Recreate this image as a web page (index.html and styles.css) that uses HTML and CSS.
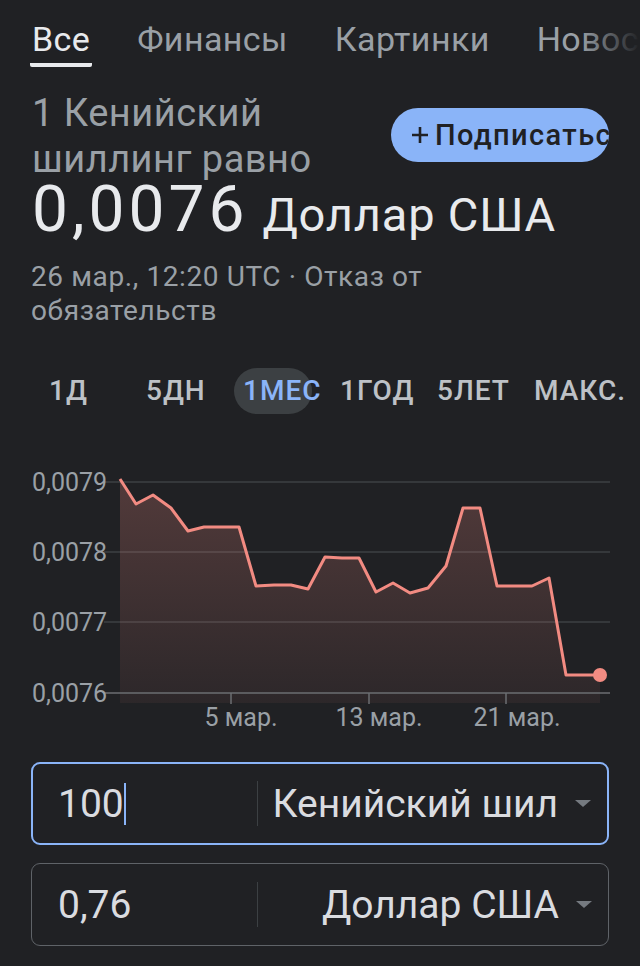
FILE: index.html
```html
<!DOCTYPE html>
<html>

<head>
  <title>1 Кенийский шиллинг равно</title>
  <meta charset="utf-8">
  <link rel="stylesheet" href="styles.css">
</head>

<body>
  <nav class="tabs">
    <span class="tab active">Все</span>
    <span class="tab">Финансы</span>
    <span class="tab">Картинки</span>
    <span class="tab">Новости</span>
    <span class="tab">Видео</span>
  </nav>

  <div class="header">
    <div class="title">1 Кенийский<br>шиллинг равно</div>
    <div class="follow">
      <svg class="plus" width="16" height="16" viewBox="0 0 16 16"><path d="M8 0v16M0 8h16" stroke="#202124" stroke-width="2.6"/></svg>
      <span>Подписаться</span>
    </div>
  </div>

  <div class="rate"><span class="value">0,0076</span><span class="currency">Доллар США</span></div>
  <div class="meta">26 мар., 12:20 UTC · Отказ от обязательств</div>

  <div class="ranges">
    <span class="range">1Д</span>
    <span class="range">5ДН</span>
    <span class="range selected">1МЕС</span>
    <span class="range">1ГОД</span>
    <span class="range">5ЛЕТ</span>
    <span class="range">МАКС.</span>
  </div>

  <svg class="chart" width="640" height="280" viewBox="0 460 640 280">
    <defs>
      <linearGradient id="fill" x1="0" y1="0" x2="0" y2="1">
        <stop offset="0" stop-color="#f28b82" stop-opacity="0.24"/>
        <stop offset="1" stop-color="#f28b82" stop-opacity="0.06"/>
      </linearGradient>
    </defs>
    <g class="grid">
      <line x1="104" y1="481" x2="610" y2="481"/>
      <line x1="104" y1="551" x2="610" y2="551"/>
      <line x1="104" y1="621" x2="610" y2="621"/>
    </g>
    <path d="M120 478 L136 503 L153 494 L171 507 L188 530 L204 526 L221 526 L239 526 L256 585 L274 584 L291 584 L308 588 L325 556 L342 557 L359 557 L376 591 L393 582 L410 592 L428 587 L446 565 L463 507 L480 507 L497 585 L515 585 L532 585 L549 577 L566 674 L584 674 L600 674 L600 702 L120 702 Z" fill="url(#fill)"/>
    <g class="axis">
      <line x1="104" y1="692" x2="610" y2="692"/>
      <line x1="231" y1="692" x2="231" y2="703"/>
      <line x1="369" y1="692" x2="369" y2="703"/>
      <line x1="506" y1="692" x2="506" y2="703"/>
    </g>
    <polyline class="line" points="120,478 136,503 153,494 171,507 188,530 204,526 221,526 239,526 256,585 274,584 291,584 308,588 325,556 342,557 359,557 376,591 393,582 410,592 428,587 446,565 463,507 480,507 497,585 515,585 532,585 549,577 566,674 584,674 600,674"/>
    <circle cx="600" cy="674" r="7" fill="#f28b82"/>
    <g class="labels">
      <text x="32" y="490">0,0079</text>
      <text x="32" y="560">0,0078</text>
      <text x="32" y="630">0,0077</text>
      <text x="32" y="701">0,0076</text>
      <text x="241" y="725" text-anchor="middle">5 мар.</text>
      <text x="379" y="725" text-anchor="middle">13 мар.</text>
      <text x="517" y="725" text-anchor="middle">21 мар.</text>
    </g>
  </svg>

  <div class="box focus">
    <div class="amount">100<span class="caret"></span></div>
    <div class="sep"></div>
    <div class="unit">Кенийский шил</div>
    <div class="arrow"></div>
  </div>
  <div class="box">
    <div class="amount">0,76</div>
    <div class="sep"></div>
    <div class="unit">Доллар США</div>
    <div class="arrow"></div>
  </div>
</body>

</html>
```

FILE: styles.css
```css
body {
  margin: 0;
  background-color: #202124;
  color: #e8eaed;
  font-family: Roboto, "Noto Sans", sans-serif;
  overflow: hidden;
}
.tabs {
  position: relative;
  display: flex;
  gap: 47px;
  padding: 19px 0 0 32px;
  font-size: 34px;
  line-height: 40px;
  color: #9aa0a6;
  white-space: nowrap;
  overflow: hidden;
}
.tabs::after {
  content: "";
  position: absolute;
  right: 0;
  top: 0;
  bottom: 0;
  width: 60px;
  background: linear-gradient(to right, rgba(32, 33, 36, 0), #202124);
}
.tab {
  padding-bottom: 4px;
  border-bottom: 4px solid transparent;
  letter-spacing: 0.4px;
}
.tab.active {
  margin: 0 -2px;
  padding: 0 2px 4px;
  color: #e8eaed;
  border-bottom-color: #e8eaed;
  border-radius: 2px;
}
.header {
  display: flex;
  justify-content: space-between;
  margin: 23px 31px 0 32px;
}
.title {
  font-size: 38px;
  line-height: 46px;
  letter-spacing: 0.5px;
  color: #9aa0a6;
}
.follow {
  display: flex;
  align-items: center;
  gap: 7px;
  width: 218px;
  height: 54px;
  margin-top: 18px;
  padding-left: 21px;
  box-sizing: border-box;
  border-radius: 27px;
  background-color: #8ab4f8;
  color: #202124;
  font-size: 29px;
  font-weight: 500;
  letter-spacing: 1.4px;
  white-space: nowrap;
  overflow: hidden;
}
.plus {
  flex-shrink: 0;
}
.rate {
  display: flex;
  align-items: baseline;
  height: 56px;
  margin: 0 32px;
  white-space: nowrap;
}
.value {
  font-size: 64px;
  line-height: 56px;
  letter-spacing: 4px;
}
.currency {
  margin-left: 14px;
  font-size: 47px;
  line-height: 46px;
  letter-spacing: 0.8px;
}
.meta {
  width: 420px;
  margin: 22px 31px 0;
  font-size: 28px;
  line-height: 34px;
  letter-spacing: 0.6px;
  color: #9aa0a6;
}
.ranges {
  display: flex;
  gap: 19px;
  margin: 40px 0 0 40px;
}
.range {
  width: 78px;
  height: 46px;
  line-height: 46px;
  padding-left: 9px;
  box-sizing: border-box;
  border-radius: 23px;
  font-size: 28px;
  font-weight: 500;
  letter-spacing: 1px;
  color: #bdc1c6;
  white-space: nowrap;
}
.range.selected {
  background-color: #3c4043;
  color: #8ab4f8;
}
.chart {
  display: block;
  margin-top: 47px;
}
.grid line {
  stroke: #3c4043;
  stroke-width: 1.5;
}
.axis line {
  stroke: #6b6e72;
  stroke-width: 1.5;
}
.line {
  fill: none;
  stroke: #f28b82;
  stroke-width: 3;
  stroke-linejoin: round;
}
.labels text {
  font-family: Roboto, sans-serif;
  font-size: 25px;
  fill: #9aa0a6;
}
.box {
  display: flex;
  align-items: center;
  height: 83px;
  margin: 21px 31px 0;
  box-sizing: border-box;
  border: 1px solid #5f6368;
  border-radius: 9px;
  font-size: 39px;
  color: #dadce0;
}
.box + .box {
  margin-top: 18px;
}
.box.focus {
  border: 2px solid #8ab4f8;
}
.amount {
  display: flex;
  align-items: center;
  width: 224px;
  padding-left: 25px;
  box-sizing: border-box;
}
.box:not(.focus) .amount {
  width: 225px;
  padding-left: 26px;
}
.caret {
  width: 2px;
  height: 42px;
  margin-left: 0;
  background-color: #8ab4f8;
}
.sep {
  width: 1px;
  height: 45px;
  background-color: #3c4043;
}
.unit {
  flex: 1;
  text-align: right;
  white-space: nowrap;
  overflow: hidden;
}
.arrow {
  width: 0;
  height: 0;
  margin: 0 16px 0 17px;
  border-left: 8px solid transparent;
  border-right: 8px solid transparent;
  border-top: 7px solid #757a80;
}
```
